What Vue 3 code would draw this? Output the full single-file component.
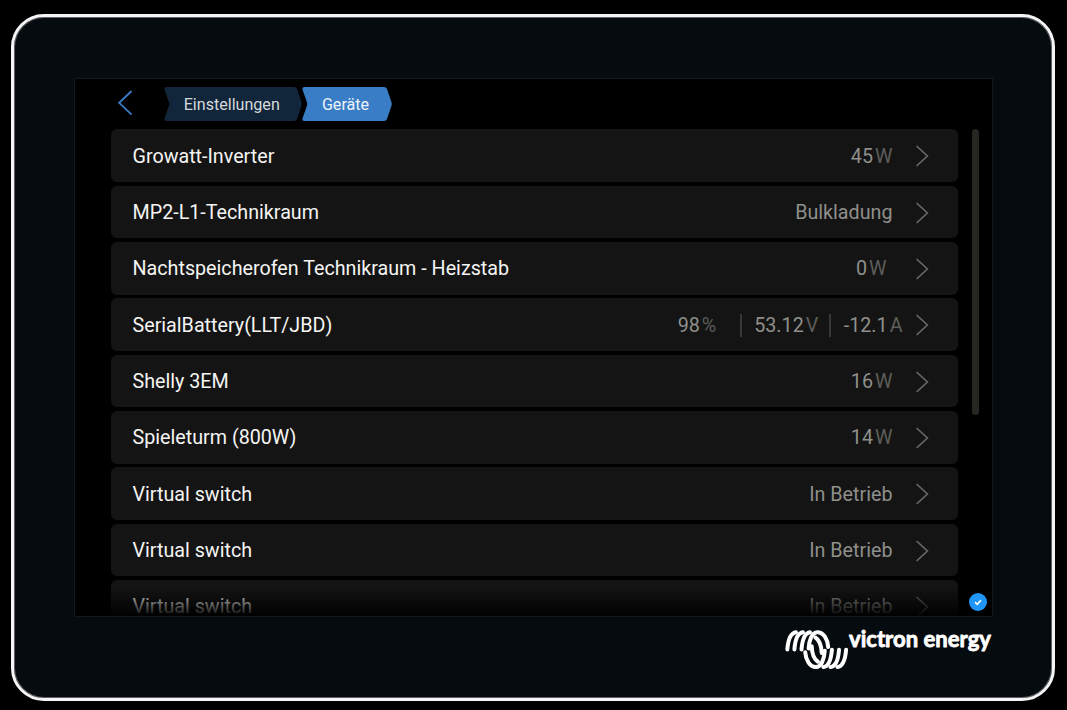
<template>
  <div class="page">
    <div class="device">
      <div class="screen">
        <header class="topbar">
          <svg class="back" viewBox="0 0 16 28" width="16" height="28">
            <path d="M14.6 2 L2.2 13.8 L14.6 25.6" />
          </svg>
          <nav class="crumbs">
            <div v-for="c in crumbs" :key="c.label" class="crumb" :class="{ active: c.active }">
              <svg class="crumb-bg" :viewBox="`0 0 ${c.width} 34`" :width="c.width" height="34">
                <path :d="crumbPath(c.width)" />
              </svg>
              <span>{{ c.label }}</span>
            </div>
          </nav>
        </header>

        <div class="content">
          <ul class="list">
            <li v-for="(d, i) in devices" :key="i" class="row">
              <span class="name">{{ d.name }}</span>
              <span v-if="d.text" class="status">{{ d.text }}</span>
              <span v-else class="values" :class="d.kind">
                <span v-for="v in d.values" :key="v.unit" class="value">
                  {{ v.num }}<span class="unit">{{ v.unit }}</span>
                </span>
              </span>
              <svg class="arrow" viewBox="0 0 14 24" width="14" height="24">
                <path d="M1.6 2 L12.4 12 L1.6 22" />
              </svg>
            </li>
          </ul>
          <div class="scrollbar"></div>
        </div>

        <div class="fade"></div>
        <svg class="badge" viewBox="0 0 18 18" width="18" height="18">
          <circle cx="9" cy="9" r="9" />
          <path d="M6 9.2 L8.2 11.3 L12 7.2" />
        </svg>
      </div>

      <footer class="brand">
        <svg viewBox="0 0 210 46" width="210" height="46">
          <g class="mark">
            <path v-for="d in coils" :key="d" :d="d" />
            <g transform="rotate(180 32.7 23.6)">
              <path v-for="d in coils" :key="d" :d="d" />
            </g>
          </g>
          <text class="brand-name" x="65" y="20.8" textLength="142" lengthAdjust="spacingAndGlyphs">victron energy</text>
        </svg>
      </footer>
    </div>
  </div>
</template>

<script setup>
const crumbs = [
  { label: 'Einstellungen', width: 138, active: false },
  { label: 'Geräte', width: 90, active: true },
]

const devices = [
  { name: 'Growatt-Inverter', kind: 'single', values: [{ num: '45', unit: 'W' }] },
  { name: 'MP2-L1-Technikraum', text: 'Bulkladung' },
  { name: 'Nachtspeicherofen Technikraum - Heizstab', kind: 'narrow', values: [{ num: '0', unit: 'W' }] },
  {
    name: 'SerialBattery(LLT/JBD)',
    kind: 'triple',
    values: [
      { num: '98', unit: '%' },
      { num: '53.12', unit: 'V' },
      { num: '-12.1', unit: 'A' },
    ],
  },
  { name: 'Shelly 3EM', kind: 'single', values: [{ num: '16', unit: 'W' }] },
  { name: 'Spieleturm (800W)', kind: 'single', values: [{ num: '14', unit: 'W' }] },
  { name: 'Virtual switch', text: 'In Betrieb' },
  { name: 'Virtual switch', text: 'In Betrieb' },
  { name: 'Virtual switch', text: 'In Betrieb' },
]

// upper half of the coil, the lower half is the same turned by 180°
const coils = [
  'M3.3 23.4 C4 15 6 7 12 6.2',
  'M10.4 23.4 C11 15 13 7 19 6.2',
  'M17.5 23.4 C18.2 15 20 7 26 6.2',
  'M24.6 22.5 C25.2 14 28 6.2 33.4 6.2 C39.6 6.2 43.6 13 44.2 21',
  'M31.4 11.5 C35.4 14 37.4 19 37.7 27',
]

function crumbPath(w) {
  return `M2.5 0 H${w - 8} Q${w - 6} 0 ${w - 5} 2 L${w - 0.4} 15.5 Q${w} 17 ${w - 0.4} 18.5 L${w - 5} 32 Q${w - 6} 34 ${w - 8} 34 H2.5 Q0 34 0.5 31.5 L5 18.5 Q5.5 17 5 15.5 L0.5 2.5 Q0 0 2.5 0 Z`
}
</script>

<style>
body {
  margin: 0;
  background: #000;
}
</style>

<style scoped>
.page {
  box-sizing: border-box;
  width: 1067px;
  height: 710px;
  padding: 14px 13px 9px 11px;
  background: #000;
  font-family: Roboto, "Liberation Sans", sans-serif;
  overflow: hidden;
}

.device {
  box-sizing: border-box;
  width: 1043.5px;
  height: 687px;
  padding: 60.5px 0 0 59.5px;
  border: 3px solid #f5f5f7;
  border-radius: 33px;
  background: #060b0f;
  box-shadow: inset 0 0 0 1px #606264;
}

.screen {
  position: relative;
  box-sizing: border-box;
  width: 919px;
  height: 539px;
  border: 1px solid #15181a;
  background: #000;
  overflow: hidden;
}

.topbar {
  box-sizing: border-box;
  display: flex;
  height: 50.8px;
  padding-left: 42px;
}

.back {
  margin-top: 10px;
}

.back path {
  fill: none;
  stroke: #387dc5;
  stroke-width: 1.8;
}

.crumbs {
  display: flex;
  margin: 8px 0 0 31px;
}

.crumb {
  position: relative;
  display: flex;
  height: 34px;
  color: #d5d9dd;
  font-size: 16.1px;
}

.crumb span {
  position: absolute;
  left: 0;
  right: 1.5px;
  text-align: center;
  line-height: 35px;
}

.crumb-bg {
  fill: #11263b;
}

.active {
  color: #eef4fa;
}

.active .crumb-bg {
  fill: #387dc5;
}

.active span {
  right: 2px;
}

.content {
  display: flex;
  gap: 14px;
  padding-left: 36px;
}

.list {
  display: flex;
  flex-direction: column;
  gap: 3.5px;
  width: 847px;
  margin: 0;
  padding: 0;
  list-style: none;
}

.row {
  box-sizing: border-box;
  display: flex;
  align-items: center;
  height: 52.83px;
  padding: 1px 28.5px 0 22px;
  border-radius: 6px;
  background: #141414;
  font-size: 19.72px;
}

.name {
  flex: 1;
  color: #f5f5f3;
}

.status,
.values {
  margin-right: 22.5px;
  color: #8f8f8b;
}

.values {
  display: flex;
}

.narrow {
  margin-right: 28.5px;
}

.triple {
  margin-right: 12.5px;
}

.unit {
  margin-left: 2px;
  color: #5d5d59;
}

.triple .value + .value {
  margin-left: 11px;
  padding-left: 12.5px;
  border-left: 2px solid #383836;
}

.triple .value:first-child {
  margin-right: 12.5px;
}

.arrow path {
  fill: none;
  stroke: #6a6a67;
  stroke-width: 1.6;
}

.scrollbar {
  width: 7px;
  height: 286px;
  border-radius: 4px;
  background: #272622;
}

.fade {
  position: absolute;
  left: 0;
  right: 0;
  bottom: 0;
  height: 30px;
  background: linear-gradient(rgba(0, 0, 0, 0), rgba(0, 0, 0, 0.95));
}

.badge {
  position: absolute;
  right: 5px;
  bottom: 5px;
}

.badge circle {
  fill: #2196f9;
}

.badge path {
  fill: none;
  stroke: #fff;
  stroke-width: 1.6;
}

.brand {
  display: flex;
  margin: 9.5px 0 0 710px;
}

.mark path {
  fill: none;
  stroke: #fff;
  stroke-width: 4;
  stroke-linecap: round;
  stroke-linejoin: round;
}

.brand-name {
  fill: #fff;
  stroke: #fff;
  stroke-width: 0.8;
  stroke-linejoin: round;
  font-family: Lato, "Liberation Sans", sans-serif;
  font-size: 22px;
  font-weight: 700;
}
</style>
